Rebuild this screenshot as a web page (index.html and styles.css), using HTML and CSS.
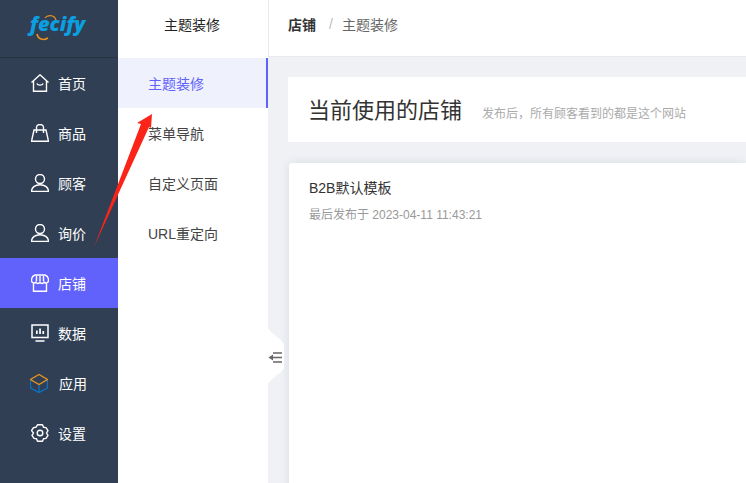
FILE: index.html
```html
<!DOCTYPE html>
<html lang="zh">
<head>
<meta charset="utf-8">
<title>主题装修</title>
<link rel="stylesheet" href="styles.css">
</head>
<body>
<div class="app">
  <aside class="rail">
    <div class="logo">
      <span class="logo-text">fecify</span>
      <svg class="logo-arcs" width="50" height="40" viewBox="0 0 50 40">
        <path d="M17 10C19 7 26 6 28 12" fill="none" stroke="#e8921e" stroke-width="1.200"/>
        <path d="M9 26C10 31 15 33 20 30" fill="none" stroke="#e8921e" stroke-width="1.500"/>
      </svg>
    </div>
    <nav class="rail-nav">
      <a class="rail-item"><svg class="ri" viewBox="1 1 18 18"><path d="M1.500 9.500 10 1.800l8.500 7.700M3.500 8v10.300h13V8M6.800 10.500c1 2.200 5.400 2.200 6.400 0" fill="none" stroke="currentColor" stroke-width="1.400"/></svg><span>首页</span></a>
      <a class="rail-item"><svg class="ri" viewBox="1 1 18 18"><path d="M4 7h12l2.500 11.300h-17zM6.500 10V4.500C6.500 2.500 8 1.500 10 1.500s3.500 1 3.500 3V10" fill="none" stroke="currentColor" stroke-width="1.400"/></svg><span>商品</span></a>
      <a class="rail-item"><svg class="ri" viewBox="1 1 18 18"><circle cx="10" cy="6" r="4.500" fill="none" stroke="currentColor" stroke-width="1.400"/><path d="M1.500 18.500c0-9 17-9 17 0z" fill="none" stroke="currentColor" stroke-width="1.400"/></svg><span>顾客</span></a>
      <a class="rail-item"><svg class="ri" viewBox="1 1 18 18"><circle cx="10" cy="6" r="4.500" fill="none" stroke="currentColor" stroke-width="1.400"/><path d="M1.500 18.500c0-9 17-9 17 0z" fill="none" stroke="currentColor" stroke-width="1.400"/></svg><span>询价</span></a>
      <a class="rail-item active"><svg class="ri" viewBox="1 1 18 18"><path d="M5 2h10c2 .6 3.500 3 3.500 5.500 0 2.500-3 3.300-4.500 1.500-1 2-3 2-4 0-1 2-3 2-4 0-1.500 1.800-4.500 1-4.500-1.500C1.500 5 3 2.600 5 2zM3.500 10.500v7.800h13v-7.800M6.500 3v5M13.500 3v5M10 3v5" fill="none" stroke="currentColor" stroke-width="1.400"/></svg><span>店铺</span></a>
      <a class="rail-item"><svg class="ri" viewBox="1 1 18 18"><path d="M2 2h16v12.500H2zM5.500 18h9" fill="none" stroke="currentColor" stroke-width="1.500"/><path d="M6 7.500h1.700V11H6zM9.200 5.500h1.700V11H9.200zM12.400 8h1.700v3h-1.700z" fill="currentColor"/></svg><span>数据</span></a>
      <a class="rail-item apps"><svg class="ri ri-box" viewBox="1 1 18 19"><path d="M1.500 6.500v8.500l8.500 4.500 8.500-4.500V6.500M10 11.500v8" fill="none" stroke="#0c73c2" stroke-width="1.300"/><path d="M10 1.500l8.500 5-8.500 5-8.500-5z" fill="none" stroke="#e8921e" stroke-width="1.300"/></svg><span>应用</span></a>
      <a class="rail-item"><svg class="ri" viewBox="1 1 18 18"><path d="M7.500 1.800h5l1 2.400 2.500.4 2 3-1.500 2.400 1.500 2.400-2 3-2.500.4-1 2.400h-5l-1-2.400-2.500-.4-2-3 1.500-2.400L1.500 7.600l2-3 2.500-.4z" fill="none" stroke="currentColor" stroke-width="1.400" stroke-linejoin="round"/><circle cx="10" cy="10" r="2.800" fill="none" stroke="currentColor" stroke-width="1.400"/></svg><span>设置</span></a>
    </nav>
  </aside>
  <aside class="subnav">
    <div class="subnav-title">主题装修</div>
    <a class="sub-item current">主题装修</a>
    <a class="sub-item">菜单导航</a>
    <a class="sub-item">自定义页面</a>
    <a class="sub-item">URL重定向</a>
  </aside>
  <main class="main">
    <header class="crumbs">
      <strong class="crumb-root">店铺</strong>
      <span class="crumb-sep">/</span>
      <span class="crumb-leaf">主题装修</span>
    </header>
    <div class="content">
      <section class="page-head">
        <h1>当前使用的店铺</h1>
        <p>发布后，所有顾客看到的都是这个网站</p>
      </section>
      <section class="card">
        <h2>B2B默认模板</h2>
        <p>最后发布于 2023-04-11 11:43:21</p>
      </section>
    </div>
  </main>
</div>
<div class="collapse">
  <svg width="17" height="60" viewBox="0 0 17 60"><path d="M0 0C0 8 16 12 16 20V40C16 48 0 52 0 60z" fill="#fff"/></svg>
  <svg class="collapse-icon" width="14" height="11" viewBox="0 0 14 11"><path d="M5 1h9M5 5.500h9M5 10h9" stroke="#666" stroke-width="1.500" fill="none"/><path d="M0.500 5.500 5 2.500v6z" fill="#666"/></svg>
</div>
<svg class="arrow" width="70" height="150" viewBox="0 0 70 150"><path d="M3 137 50 14 46 13 61 4 60 18 58 17z" fill="#fb2418"/></svg>
</body>
</html>
```
FILE: styles.css
```css
* { box-sizing: border-box; }
html, body { margin: 0; height: 100%; overflow: hidden; }
body {
  position: relative;
  font-family: "Liberation Sans", "Noto Sans CJK SC", sans-serif;
  font-size: 14px;
  color: #333;
  background: #eff1f5;
}
.app { display: flex; width: 746px; height: 483px; }
.rail { flex: 0 0 118px; background: #303f54; color: #fff; }
.logo {
  position: relative;
  display: flex;
  align-items: center;
  justify-content: center;
  height: 58px;
  padding: 0 3px 9px 0;
  border-bottom: 1px solid #283444;
}
.logo-arcs { position: absolute; left: 28px; top: 8px; }
.logo-text {
  font-family: "Open Sans", sans-serif;
  font-style: italic;
  font-weight: 800;
  font-size: 20px;
  line-height: 24px;
  color: #0b9fe0;
}
.rail-item {
  display: flex;
  align-items: center;
  gap: 9px;
  height: 50px;
  padding-left: 31px;
  color: #fff;
}
.ri { flex: none; width: 18px; height: 18px; }
.rail-item.active { background: #6161fb; }
.rail-item.apps { gap: 11px; padding-left: 30px; }
.ri-box { width: 18px; height: 19px; }
.subnav { flex: 0 0 150px; background: #fff; }
.subnav-title {
  display: flex;
  align-items: center;
  justify-content: center;
  height: 58px;
  padding: 0 2px 10px 0;
  font-size: 14px;
  color: #222;
}
.sub-item {
  display: flex;
  align-items: center;
  height: 50px;
  padding-left: 30px;
  font-size: 14px;
  color: #444;
}
.sub-item.current {
  color: #6161fb;
  background: #eff1fd;
  border-right: 2px solid #6161fb;
}
.main { flex: 1; min-width: 0; display: flex; flex-direction: column; }
.crumbs {
  display: flex;
  align-items: center;
  height: 57px;
  padding: 0 0 9px 19px;
  background: #fff;
  border-bottom: 1px solid #e8eaee;
  border-left: 1px solid #e8eaee;
  font-size: 14px;
}
.crumb-root { color: #333; }
.crumb-sep { margin: 0 9px 0 13px; color: #bbb; }
.crumb-leaf { color: #666; }
.content { padding: 20px 0 0 20px; flex: 1; min-height: 0; }
.page-head {
  display: flex;
  align-items: baseline;
  height: 65px;
  padding: 15px 0 0 20px;
  background: #fff;
}
.page-head h1 { margin: 0; font-size: 22px; font-weight: 400; color: #333; }
.page-head p { margin: 0 0 0 20px; font-size: 12px; color: #aaa; }
.card {
  height: 330px;
  margin-top: 21px;
  margin-left: 1px;
  padding: 15px 20px;
  background: #fff;
  border-radius: 3px 0 0 0;
  box-shadow: 0 0 10px rgba(60, 70, 100, 0.12);
}
.card h2 { margin: 0; font-size: 14px; font-weight: 400; color: #333; line-height: 20px; }
.card p { margin: 8px 0 0; font-size: 12px; color: #999; line-height: 18px; }
.collapse { position: absolute; left: 268px; top: 326px; width: 17px; height: 60px; }
.collapse svg { display: block; }
.collapse-icon { position: absolute; left: 0; top: 26px; }
.arrow { position: absolute; left: 91px; top: 110px; }
```
